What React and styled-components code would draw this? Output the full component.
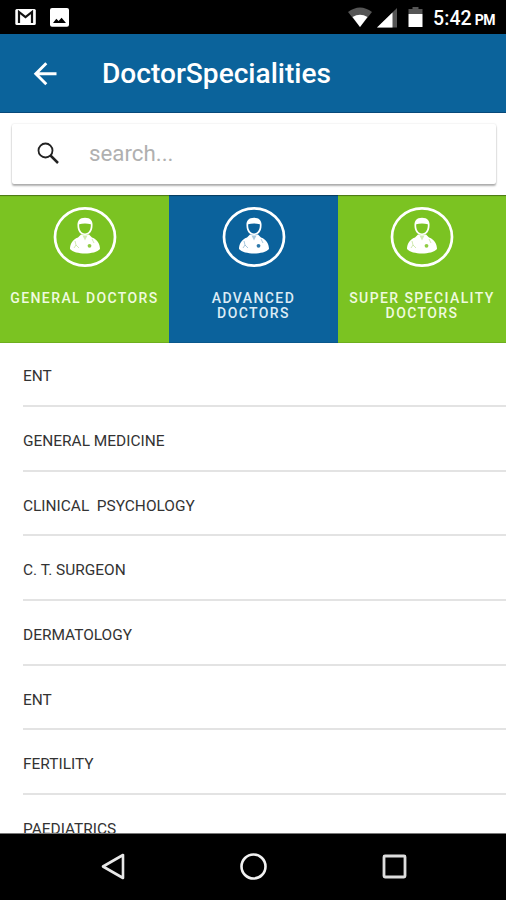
import React from 'react';
import styled, { createGlobalStyle } from 'styled-components';

const GlobalStyle = createGlobalStyle`
  * {
    box-sizing: border-box;
  }

  body {
    margin: 0;
    background: #fff;
    font-family: Roboto, 'Liberation Sans', sans-serif;
  }
`;

const Screen = styled.div`
  display: flex;
  flex-direction: column;
  width: 506px;
  height: 900px;
  overflow: hidden;
  background: #fff;
`;

const StatusBar = styled.div`
  display: flex;
  flex: none;
  justify-content: space-between;
  height: 34px;
  padding: 0 8px 0 15px;
  background: #000;
  color: #fff;
`;

const StatusGroup = styled.div`
  display: flex;
  align-items: flex-start;

  svg {
    flex: none;
  }
`;

const Clock = styled.span`
  width: 65px;
  margin-left: 1px;
  padding-top: 7px;
  font-size: 19.5px;
  font-weight: 500;
  line-height: 23px;
  letter-spacing: 0.1px;
  white-space: nowrap;

  small {
    margin-left: 3px;
    font-size: 14px;
    font-weight: 700;
    letter-spacing: -0.6px;
  }
`;

const Header = styled.header`
  display: flex;
  flex: none;
  align-items: center;
  height: 79px;
  padding-left: 30px;
  background: #0b639b;
  border-bottom: 1px solid #07497a;
  color: #fff;

  h1 {
    margin: 2px 0 0 42px;
    font-size: 28.1px;
    font-weight: 500;
    line-height: 34px;
  }
`;

const SearchWrap = styled.div`
  flex: none;
  height: 82px;
  padding: 11px 10px 11px 12px;
`;

const SearchBox = styled.label`
  display: flex;
  align-items: center;
  height: 60px;
  padding-left: 22px;
  background: #fff;
  border-radius: 2px;
  box-shadow: 0 2px 2px rgba(0, 0, 0, 0.3), 0 0 2px rgba(0, 0, 0, 0.14);

  input {
    width: 360px;
    margin: 0 0 2px 25px;
    padding: 0;
    border: 0;
    outline: 0;
    background: none;
    font: 400 22.3px/28px Roboto, 'Liberation Sans', sans-serif;
  }

  input::placeholder {
    color: #b0b0b0;
    opacity: 1;
  }
`;

const Tabs = styled.nav`
  display: grid;
  flex: none;
  grid-template-columns: 169px 169px 168px;
  height: 148px;
`;

const Tab = styled.button`
  display: flex;
  flex-direction: column;
  align-items: center;
  padding: 11px 0 0;
  border: 0;
  background: ${props => (props.$active ? '#0b629c' : '#7bc322')};
  box-shadow: inset 0 2px 1px -1px rgba(0, 0, 0, 0.4), inset 0 -1px 0 rgba(0, 0, 0, 0.1);
  color: #fff;
  font-family: inherit;

  span {
    margin-top: 23px;
    color: ${props => (props.$active ? '#dcebf5' : '#effadf')};
    font-size: 14px;
    font-weight: 500;
    line-height: 15px;
    letter-spacing: 1.4px;
    white-space: pre;
  }
`;

const List = styled.ul`
  flex: 1;
  min-height: 0;
  margin: 0;
  padding: 0 0 0 23px;
  overflow: hidden;
  list-style: none;
`;

const ListItem = styled.li`
  height: 64.7px;
  padding-top: 24px;
  border-bottom: 2px solid #e3e3e3;
  color: #333;
  font-size: 15.45px;
  line-height: 20px;
  white-space: pre;

  &:first-child {
    height: 64px;
    padding-top: 23px;
  }
`;

const NavBar = styled.footer`
  display: flex;
  flex: none;
  justify-content: center;
  gap: 108px;
  height: 67px;
  padding-top: 17px;
  background: #000;
  border-top: 1px solid #777;
`;

const tabs = [
  { label: 'GENERAL DOCTORS' },
  { label: 'ADVANCED\nDOCTORS', active: true },
  { label: 'SUPER SPECIALITY\nDOCTORS' },
];

const specialities = [
  'ENT',
  'GENERAL MEDICINE',
  'CLINICAL  PSYCHOLOGY',
  'C. T. SURGEON',
  'DERMATOLOGY',
  'ENT',
  'FERTILITY',
  'PAEDIATRICS',
];

function DoctorIcon({ color }) {
  return (
    <svg width="64" height="62" viewBox="0 0 64 62">
      <ellipse cx="32" cy="31" rx="30" ry="28.6" fill="none" stroke="#fff" strokeWidth="2.7" />
      {/* shoulders and coat */}
      <path
        d="M17 43c0-5 2.500-9.500 8-11.500l3-3h8l3 3c5.500 2 8 6.500 8 11.500-5 6-25 6-30 0z"
        fill="#fff"
      />
      {/* head with cap */}
      <path d="M24.500 20c-.5-5 2-8.300 7.500-8.300s8 3.300 7.500 8.300c0 5-3 9-7.500 9s-7.500-4-7.500-9z" fill="#fff" />
      <path d="M26.200 18.200c3.500-.9 8-.9 11.600 0 .4 5-2 9.300-5.800 9.300s-6.200-4.300-5.800-9.300z" fill={color} />
      <path d="M29.500 29.500l2.500 5 2.500-5z" fill={color} opacity="0.35" />
      <path d="M22 35l1 4m-2 3l2-3 3 3M39 33l2 4" fill="none" stroke={color} strokeWidth="0.9" opacity="0.4" />
      <circle cx="36.500" cy="39.800" r="1.900" fill={color} opacity="0.85" />
    </svg>
  );
}

function StatusIcons() {
  return (
    <StatusGroup>
      <svg width="84" height="34" viewBox="0 0 84 34">
        <path d="M0 12Q12 3 24 12L12 27z" fill="#555" />
        <path d="M4.500 17Q12 12.500 19.500 17L12 27z" fill="#fff" />
        <path d="M29 27.500L49 8v19.500z" fill="#555" />
        <path d="M29 27.500L44.500 12.500v15z" fill="#fff" />
        <path d="M60.500 14V9h4V7h6v2h4v5z" fill="#555" />
        <path d="M60.500 14h14v13h-14z" fill="#fff" />
      </svg>
      <Clock>
        5:42<small>PM</small>
      </Clock>
    </StatusGroup>
  );
}

function App() {
  return (
    <>
      <GlobalStyle />
      <Screen>
        <StatusBar>
          <StatusGroup>
            <svg width="56" height="34" viewBox="0 0 56 34">
              <rect x="0.300" y="9" width="20.500" height="16" rx="1.500" fill="#fff" />
              <path d="M4 23V12l6.500 5.200L17 12v11" fill="none" stroke="#111" strokeWidth="2.200" />
              <rect x="35" y="8" width="19" height="18.700" rx="2" fill="#fff" />
              <path d="M38 23l3.300-4.200 2.300 2.200 3-3.200L51 23z" fill="#000" />
            </svg>
          </StatusGroup>
          <StatusIcons />
        </StatusBar>
        <Header>
          <svg width="30" height="30" viewBox="0 0 30 30">
            <path d="M26.500 15.700H6M16.300 5.200L5.800 15.700l10.500 10.500" fill="none" stroke="#fff" strokeWidth="2.900" />
          </svg>
          <h1>DoctorSpecialities</h1>
        </Header>
        <SearchWrap>
          <SearchBox>
            <svg width="30" height="30" viewBox="0 0 30 30">
              <circle cx="11.500" cy="11.500" r="7" fill="none" stroke="#222" strokeWidth="1.800" />
              <path d="M16.500 16.500l7.500 7.500" stroke="#222" strokeWidth="2.500" />
            </svg>
            <input placeholder="search..." />
          </SearchBox>
        </SearchWrap>
        <Tabs>
          {tabs.map((tab) => (
            <Tab key={tab.label} $active={tab.active}>
              <DoctorIcon color={tab.active ? '#0b629c' : '#7bc322'} />
              <span>{tab.label}</span>
            </Tab>
          ))}
        </Tabs>
        <List>
          {specialities.map((name, i) => (
            <ListItem key={name + i}>{name}</ListItem>
          ))}
        </List>
        <NavBar>
          <svg width="33" height="32" viewBox="0 0 33 32">
            <path d="M27 4v23L7 15.500z" fill="none" stroke="#e8e8e8" strokeWidth="2.600" strokeLinejoin="round" />
          </svg>
          <svg width="33" height="32" viewBox="0 0 33 32">
            <circle cx="16.500" cy="15.500" r="12" fill="none" stroke="#f2f2f2" strokeWidth="2.600" />
          </svg>
          <svg width="33" height="32" viewBox="0 0 33 32">
            <rect x="6" y="5" width="21" height="21" rx="1" fill="none" stroke="#ddd" strokeWidth="2.800" />
          </svg>
        </NavBar>
      </Screen>
    </>
  );
}

export default App;
